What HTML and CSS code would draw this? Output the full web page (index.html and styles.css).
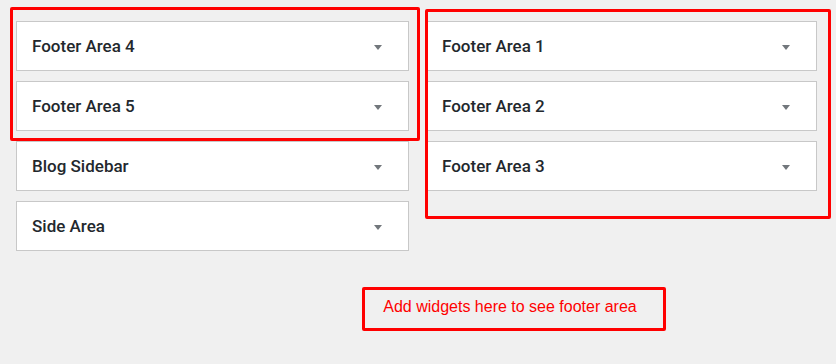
FILE: index.html
```html
<!DOCTYPE html>
<html lang="en">
<head>
    <meta charset="UTF-8">
    <title>Widgets</title>
    <link rel="stylesheet" href="styles.css">
</head>
<body>
    <div class="sidebars">
        <div class="column">
            <div class="widget"><h3>Footer Area 4</h3><span class="arrow"></span></div>
            <div class="widget"><h3>Footer Area 5</h3><span class="arrow"></span></div>
            <div class="widget"><h3>Blog Sidebar</h3><span class="arrow"></span></div>
            <div class="widget"><h3>Side Area</h3><span class="arrow"></span></div>
        </div>
        <div class="column">
            <div class="widget"><h3>Footer Area 1</h3><span class="arrow"></span></div>
            <div class="widget"><h3>Footer Area 2</h3><span class="arrow"></span></div>
            <div class="widget"><h3>Footer Area 3</h3><span class="arrow"></span></div>
        </div>
    </div>

    <div class="note">Add widgets here to see footer area</div>

    <!-- annotation boxes drawn over the screenshot -->
    <div class="mark mark-left"></div>
    <div class="mark mark-right"></div>
</body>
</html>
```

FILE: styles.css
```css
body { margin: 0; background: #f0f0f0; font-family: Roboto, "Liberation Sans", sans-serif; position: relative; height: 364px; overflow: hidden; }
.sidebars { display: grid; grid-template-columns: 393px 391px; column-gap: 17px; padding: 21px 0 0 16px; align-items: start; }
.column { display: flex; flex-direction: column; gap: 10px; }
.widget { height: 50px; box-sizing: border-box; background: #fff; border: 1px solid #c8c8c8; display: flex; align-items: center; justify-content: space-between; padding: 0 26px 0 15px; }
.widget h3 { margin: 0; font-size: 17px; font-weight: 500; color: #23282d; }
.arrow { width: 0; height: 0; border-left: 4px solid transparent; border-right: 4px solid transparent; border-top: 5px solid #72777c; margin-top: 2px; }
.note { margin: 36px 0 0 362px; width: 304px; height: 44px; box-sizing: border-box; border: 3px solid #ff0000; color: #ff0000; font-family: "Liberation Sans", Arial, sans-serif; font-size: 16px; text-align: center; padding: 8px 8px 0 0; border-radius: 2px; }
.mark { position: absolute; border: 3px solid #ff0000; box-sizing: border-box; border-radius: 2px; }
.mark-left { left: 10px; top: 7px; width: 410px; height: 134px; }
.mark-right { left: 425px; top: 9px; width: 406px; height: 210px; }
```
